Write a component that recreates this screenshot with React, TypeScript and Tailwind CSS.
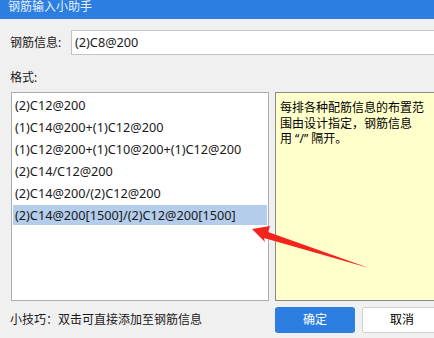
import React from 'react'

const formats = [
  '(2)C12@200',
  '(1)C14@200+(1)C12@200',
  '(1)C12@200+(1)C10@200+(1)C12@200',
  '(2)C14/C12@200',
  '(2)C14@200/(2)C12@200',
  '(2)C14@200[1500]/(2)C12@200[1500]',
]

const font = { fontFamily: '"Noto Sans", "Noto Sans CJK SC", sans-serif' }

export default function App() {
  const selected = 5

  return (
    <div
      style={font}
      className="relative flex h-[338px] w-[434px] flex-col overflow-hidden bg-[#f0f0f0] text-[12px] text-[#1a1a1a]"
    >
      {/* Title bar */}
      <div className="flex h-[19px] shrink-0 items-start bg-[#2c7fe0] pl-[8px] text-[12px] leading-[13px] text-[#e8f0fb]">
        钢筋输入小助手
      </div>

      {/* Rebar info input */}
      <div className="mt-[11px] flex h-[25px] items-center">
        <span className="w-[71px] shrink-0 pl-[10px] leading-none">钢筋信息:</span>
        <div className="flex h-[25px] w-[380px] shrink-0 items-center border border-[#c4c4c4] bg-white pl-[3px] text-[12.7px] leading-none">
          (2)C8@200
        </div>
      </div>

      <div className="mt-[15px] pl-[10px] leading-[16px]">格式:</div>

      {/* List + description */}
      <div className="mt-[6px] flex h-[209px] shrink-0">
        <div className="ml-[11px] flex w-[258px] shrink-0 flex-col border border-[#acacac] bg-white pt-[1px] text-[12.7px]">
          {formats.map((f, i) => (
            <div key={f} className="flex h-[22px] items-center py-[1px]">
              <div
                className={`flex h-full w-full items-center pl-[2px] leading-none ${
                  i === selected ? 'ml-[1px] mr-[1px] bg-[#b4cdeb]' : 'ml-[1px]'
                }`}
              >
                {f}
              </div>
            </div>
          ))}
        </div>
        <div className="ml-[6px] w-[170px] shrink-0 border border-[#8a8a8a] bg-[#ffffcc] pl-[4px] pt-[7px] leading-[15.5px] text-black">
          每排各种配筋信息的布置范
          <br />
          围由设计指定，钢筋信息
          <br />
          用 “/” 隔开。
        </div>
      </div>

      {/* Footer */}
      <div className="mt-[6px] flex h-[26px] items-center">
        <span className="w-[275px] shrink-0 pl-[10px] leading-none">
          小技巧：双击可直接添加至钢筋信息
        </span>
        <button className="h-[26px] w-[80px] shrink-0 rounded-[3px] bg-[#2c7fe0] text-[12px] text-white">
          确定
        </button>
        <button className="ml-[7px] h-[26px] w-[80px] shrink-0 rounded-[3px] border border-[#cfcfcf] bg-white text-[12px] text-black">
          取消
        </button>
      </div>

      {/* Red annotation arrow */}
      <svg className="pointer-events-none absolute left-0 top-0" width="434" height="338">
        <polygon
          points="252,229 270,226 268,232 369,268 264,238 265,242"
          fill="#f4231c"
        />
      </svg>
    </div>
  )
}
